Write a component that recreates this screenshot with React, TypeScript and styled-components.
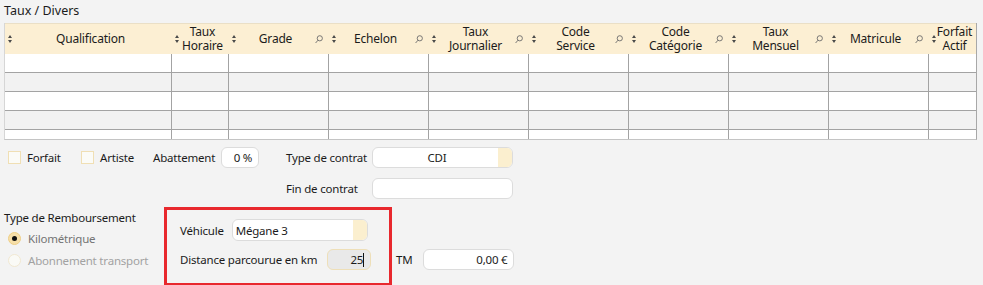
import React from "react";
import styled, { createGlobalStyle } from "styled-components";

const Global = createGlobalStyle`
  html, body { margin: 0; padding: 0; background: #f3f3f3; }
  body { font-family: "Noto Sans", "Open Sans", sans-serif; font-size: 11.5px; letter-spacing: -0.2px; color: #1b1b1b; }
  * { box-sizing: border-box; }
`;

const Page = styled.div`
  width: 983px;
  height: 285px;
  overflow: hidden;
  background: #f3f3f3;
  padding: 2px 0 0 4px;
`;

const Title = styled.div`
  height: 17px;
  line-height: 17px;
  font-size: 12.5px;
  letter-spacing: 0;
`;

const Table = styled.div`
  margin-top: 4px;
  width: 973px;
  border-left: 1px solid #d6d6d6;
  border-right: 1px solid #a8a8a8;
  border-bottom: 1px solid #c4c4c4;
`;

const cols = "167px 57px 100px 100px 100px 100px 100px 100px 100px 1fr";

const HeaderRow = styled.div`
  display: grid;
  grid-template-columns: ${cols};
  height: 31px;
  background: #fcefd3;
  border-top: 1px solid #eadfc6;
`;

const HeadCell = styled.div`
  display: flex;
  align-items: center;
  padding: 0 3px 0 3px;
  min-width: 0;
`;

const HeadLabel = styled.div`
  flex: 1;
  text-align: center;
  line-height: 14px;
  font-size: 12px;
  white-space: pre-line;
`;

const Body = styled.div`
  height: 85px;
  overflow: hidden;
`;

const Row = styled.div<{ $alt: boolean }>`
  display: grid;
  grid-template-columns: ${cols};
  height: 19px;
  background: ${(p) => (p.$alt ? "#f2f2f2" : "#ffffff")};
  border-bottom: 1px solid #a3a3a3;
`;

const Cell = styled.div<{ $last: boolean }>`
  border-right: ${(p) => (p.$last ? "none" : "1px solid #a3a3a3")};
`;

const Form = styled.div`
  margin-top: 7px;
  display: grid;
  grid-template-columns: 282px 86px 141px;
  grid-template-rows: 21px 21px;
  row-gap: 10px;
  align-items: center;
`;

const Inline = styled.div`
  display: flex;
  align-items: center;
  padding-left: 4px;
`;

const Check = styled.span`
  width: 13px;
  height: 13px;
  border: 1px solid #f0dfb4;
  background: #fbfbf7;
  margin-right: 6px;
`;

const CheckLabel = styled.span<{ $w: number }>`
  width: ${(p) => p.$w}px;
`;

const Label = styled.span`
  white-space: nowrap;
`;

const Field = styled.div<{ $w: number; $align?: string; $bg?: string; $border?: string; $tail?: boolean }>`
  width: ${(p) => p.$w}px;
  height: 21px;
  border: 1px solid ${(p) => p.$border || "#dcdcdc"};
  border-radius: 6px;
  background: ${(p) => p.$bg || "#ffffff"};
  display: flex;
  align-items: center;
  justify-content: ${(p) => p.$align || "flex-start"};
  padding: 0 6px 0 3px;
  overflow: hidden;
  ${(p) => (p.$tail ? "padding-right: 0;" : "")}
`;

const FieldText = styled.span<{ $center?: boolean }>`
  flex: ${(p) => (p.$center ? 1 : "0 0 auto")};
  text-align: ${(p) => (p.$center ? "center" : "left")};
`;

const Tail = styled.span`
  margin-left: auto;
  width: 14px;
  align-self: stretch;
  background: #fbefcf;
`;

const Caret = styled.span`
  display: inline-block;
  width: 1px;
  height: 14px;
  background: #111;
`;

const Bottom = styled.div`
  margin-top: 8px;
  display: flex;
  align-items: flex-start;
`;

const LeftCol = styled.div`
  width: 160px;
  padding-top: 2px;
`;

const GroupTitle = styled.div`
  height: 18px;
  line-height: 18px;
`;

const RadioRow = styled.div<{ $muted: string }>`
  display: flex;
  align-items: center;
  height: 22px;
  padding-left: 4px;
  color: ${(p) => p.$muted};
`;

const Radio = styled.span<{ $on: boolean }>`
  width: 13px;
  height: 13px;
  border-radius: 50%;
  border: 1px solid ${(p) => (p.$on ? "#efcf86" : "#f1e8d2")};
  background: ${(p) => (p.$on ? "#f6dfa9" : "#fafaf6")};
  margin-right: 7px;
  display: flex;
  align-items: center;
  justify-content: center;
  &::after {
    content: "";
    width: 5px;
    height: 5px;
    border-radius: 50%;
    background: ${(p) => (p.$on ? "#111" : "transparent")};
  }
`;

const RedBox = styled.div`
  width: 228px;
  height: 79px;
  border: 3px solid #e8282d;
  padding: 9px 0 0 13px;
  display: grid;
  grid-template-rows: 22px 21px;
  row-gap: 8px;
`;

const BoxRow = styled.div`
  display: flex;
  align-items: center;
`;

const TMGroup = styled.div`
  display: flex;
  align-items: center;
  margin-top: 42px;
  margin-left: 4px;
`;

const SortIcon = () => (
  <svg width="4" height="8" viewBox="0 0 4 8">
    <polygon points="2,0 4,3 0,3" fill="#4a4a4a" />
    <polygon points="0,5 4,5 2,8" fill="#4a4a4a" />
  </svg>
);

const SearchIcon = () => (
  <svg width="8" height="9" viewBox="0 0 8 9" style={{ marginRight: 3 }}>
    <circle cx="4.8" cy="3.3" r="2.6" fill="none" stroke="#6b6b6b" strokeWidth="0.9" />
    <line x1="3" y1="5.2" x2="0.6" y2="8" stroke="#6b6b6b" strokeWidth="0.9" />
  </svg>
);

const columns = [
  { label: "Qualification", search: false },
  { label: "Taux\nHoraire", search: false },
  { label: "Grade", search: true },
  { label: "Echelon", search: true },
  { label: "Taux\nJournalier", search: true },
  { label: "Code\nService", search: true },
  { label: "Code\nCatégorie", search: true },
  { label: "Taux\nMensuel", search: true },
  { label: "Matricule", search: true },
  { label: "Forfait\nActif", search: false },
];

export default function App() {
  return (
    <>
      <Global />
      <Page>
        <Title>Taux / Divers</Title>
        <Table>
          <HeaderRow>
            {columns.map((c) => (
              <HeadCell key={c.label}>
                <SortIcon />
                <HeadLabel>{c.label}</HeadLabel>
                {c.search && <SearchIcon />}
              </HeadCell>
            ))}
          </HeaderRow>
          <Body>
            {[0, 1, 2, 3, 4].map((r) => (
              <Row key={r} $alt={r % 2 === 1}>
                {columns.map((c, i) => (
                  <Cell key={c.label} $last={i === columns.length - 1} />
                ))}
              </Row>
            ))}
          </Body>
        </Table>

        <Form>
          <Inline>
            <Check />
            <CheckLabel $w={54}>Forfait</CheckLabel>
            <Check />
            <CheckLabel $w={53}>Artiste</CheckLabel>
            <Label>Abattement</Label>
            <Field $w={38} $align="flex-end" style={{ marginLeft: 6 }}>
              <FieldText>0 %</FieldText>
            </Field>
          </Inline>
          <Label>Type de contrat</Label>
          <Field $w={141} $tail>
            <FieldText $center>CDI</FieldText>
            <Tail />
          </Field>
          <span />
          <Label>Fin de contrat</Label>
          <Field $w={141} />
        </Form>

        <Bottom>
          <LeftCol>
            <GroupTitle>Type de Remboursement</GroupTitle>
            <RadioRow $muted="#747474">
              <Radio $on />
              Kilométrique
            </RadioRow>
            <RadioRow $muted="#a2a2a2">
              <Radio $on={false} />
              Abonnement transport
            </RadioRow>
          </LeftCol>
          <RedBox>
            <BoxRow>
              <Label>Véhicule</Label>
              <Field $w={136} $tail style={{ marginLeft: 8, height: 22 }}>
                <FieldText>Mégane 3</FieldText>
                <Tail />
              </Field>
            </BoxRow>
            <BoxRow>
              <Label>Distance parcourue en km</Label>
              <Field $w={44} $align="flex-end" $bg="#e9e9e9" $border="#eedfb8" style={{ marginLeft: 10 }}>
                <FieldText>25</FieldText>
                <Caret />
              </Field>
            </BoxRow>
          </RedBox>
          <TMGroup>
            <Label>TM</Label>
            <Field $w={91} $align="flex-end" style={{ marginLeft: 11 }}>
              <FieldText>0,00 €</FieldText>
            </Field>
          </TMGroup>
        </Bottom>
      </Page>
    </>
  );
}
